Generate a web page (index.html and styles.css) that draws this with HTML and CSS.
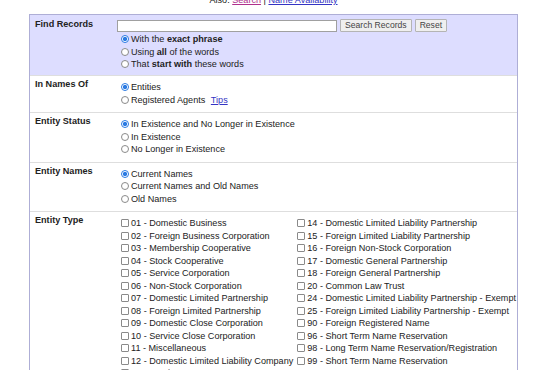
FILE: index.html
```html
<!DOCTYPE html>
<html lang="en">

<head>
  <meta charset="UTF-8">
  <meta name="viewport" content="width=device-width, initial-scale=1.0">
  <title>Business Entity Records Search</title>
  <link rel="stylesheet" href="styles.css">
</head>

<body>
  <div id="page">
    <div class="also">Also: <a href="#" class="visited">Search</a> | <a href="#">Name Availability</a></div>

    <form name="searchForm" class="search-box">
      <div class="row row-find">
        <div class="label">Find Records</div>
        <div class="value">
          <div class="query">
            <input type="text" name="q" class="q">
            <input type="button" value="Search Records" class="btn">
            <input type="reset" value="Reset" class="btn">
          </div>
          <label class="opt"><input type="radio" name="mode" checked>With the <b>exact phrase</b></label>
          <label class="opt"><input type="radio" name="mode">Using <b>all</b> of the words</label>
          <label class="opt"><input type="radio" name="mode">That <b>start with</b> these words</label>
        </div>
      </div>

      <div class="row">
        <div class="label">In Names Of</div>
        <div class="value">
          <label class="opt"><input type="radio" name="of" checked>Entities</label>
          <label class="opt"><input type="radio" name="of">Registered Agents <a href="#" class="tips">Tips</a></label>
        </div>
      </div>

      <div class="row">
        <div class="label">Entity Status</div>
        <div class="value">
          <label class="opt"><input type="radio" name="status" checked>In Existence and No Longer in Existence</label>
          <label class="opt"><input type="radio" name="status">In Existence</label>
          <label class="opt"><input type="radio" name="status">No Longer in Existence</label>
        </div>
      </div>

      <div class="row">
        <div class="label">Entity Names</div>
        <div class="value">
          <label class="opt"><input type="radio" name="names" checked>Current Names</label>
          <label class="opt"><input type="radio" name="names">Current Names and Old Names</label>
          <label class="opt"><input type="radio" name="names">Old Names</label>
        </div>
      </div>

      <div class="row">
        <div class="label">Entity Type</div>
        <div class="value types">
          <div class="col">
            <label class="opt"><input type="checkbox">01 - Domestic Business</label>
            <label class="opt"><input type="checkbox">02 - Foreign Business Corporation</label>
            <label class="opt"><input type="checkbox">03 - Membership Cooperative</label>
            <label class="opt"><input type="checkbox">04 - Stock Cooperative</label>
            <label class="opt"><input type="checkbox">05 - Service Corporation</label>
            <label class="opt"><input type="checkbox">06 - Non-Stock Corporation</label>
            <label class="opt"><input type="checkbox">07 - Domestic Limited Partnership</label>
            <label class="opt"><input type="checkbox">08 - Foreign Limited Partnership</label>
            <label class="opt"><input type="checkbox">09 - Domestic Close Corporation</label>
            <label class="opt"><input type="checkbox">10 - Service Close Corporation</label>
            <label class="opt"><input type="checkbox">11 - Miscellaneous</label>
            <label class="opt"><input type="checkbox">12 - Domestic Limited Liability Company</label>
            <label class="opt"><input type="checkbox">13 - Foreign LLC</label>
          </div>
          <div class="col">
            <label class="opt"><input type="checkbox">14 - Domestic Limited Liability Partnership</label>
            <label class="opt"><input type="checkbox">15 - Foreign Limited Liability Partnership</label>
            <label class="opt"><input type="checkbox">16 - Foreign Non-Stock Corporation</label>
            <label class="opt"><input type="checkbox">17 - Domestic General Partnership</label>
            <label class="opt"><input type="checkbox">18 - Foreign General Partnership</label>
            <label class="opt"><input type="checkbox">20 - Common Law Trust</label>
            <label class="opt"><input type="checkbox">24 - Domestic Limited Liability Partnership - Exempt</label>
            <label class="opt"><input type="checkbox">25 - Foreign Limited Liability Partnership - Exempt</label>
            <label class="opt"><input type="checkbox">90 - Foreign Registered Name</label>
            <label class="opt"><input type="checkbox">96 - Short Term Name Reservation</label>
            <label class="opt"><input type="checkbox">98 - Long Term Name Reservation/Registration</label>
            <label class="opt"><input type="checkbox">99 - Short Term Name Reservation</label>
          </div>
        </div>
      </div>
    </form>
  </div>
</body>

</html>
```

FILE: styles.css
```css
body {
  margin: 0;
  font-family: "Liberation Sans", Arial, sans-serif;
  font-size: 9.1px;
  line-height: 12.5px;
  color: #222;
  background: #fff;
}

#page {
  width: 489px;
  margin-left: 29px;
}

.also {
  margin-top: -6px;
  height: 20px;
  text-align: center;
}

.also a {
  color: #3434c4;
}

.also a.visited {
  color: #b0308c;
}

/* search form */
.search-box {
  border: 1px solid #aeaed6;
  border-bottom: none;
}

.row {
  display: grid;
  grid-template-columns: 87px 1fr;
  border-top: 1px solid #dedede;
}

.row-find {
  border-top: none;
  background-color: #ddddff;
}

.label {
  padding: 2px 0 0 5px;
  font-weight: bold;
}

.value {
  padding: 5px 0 6px 0;
}

.row-find .label {
  padding-top: 3px;
}

.row-find .value {
  padding: 3px 0 4.5px 0;
}

.query {
  display: flex;
  align-items: center;
  gap: 3px;
  height: 15px;
}

.q {
  width: 220px;
  height: 12px;
  margin: 0;
  padding: 0 2px;
  box-sizing: border-box;
  border: 1px solid #a0a0a0;
  background: #fff;
}

.btn {
  height: 13px;
  margin: 0;
  padding: 0 4px;
  font-family: inherit;
  font-size: 8.6px;
  line-height: 11px;
  color: #444;
  background: #efefef;
  border: 1px solid #b4b4b4;
  border-radius: 1px;
}

.opt {
  display: block;
  height: 12.5px;
  white-space: nowrap;
}

.opt input {
  appearance: none;
  display: inline-block;
  vertical-align: -1px;
  width: 8px;
  height: 8px;
  margin: 0 2px 0 4px;
  box-sizing: border-box;
  border: 1px solid #8a8a8a;
  background: #fff;
}

.opt input[type="radio"] {
  border-radius: 50%;
}

.opt input[type="radio"]:checked {
  border-color: #2a7ae2;
  background: radial-gradient(circle, #2a7ae2 0 45%, #fff 55%);
}

.opt input[type="checkbox"] {
  border-radius: 1px;
}

.tips {
  margin-left: 3px;
  color: #3434c4;
}

.types {
  display: flex;
}
```
